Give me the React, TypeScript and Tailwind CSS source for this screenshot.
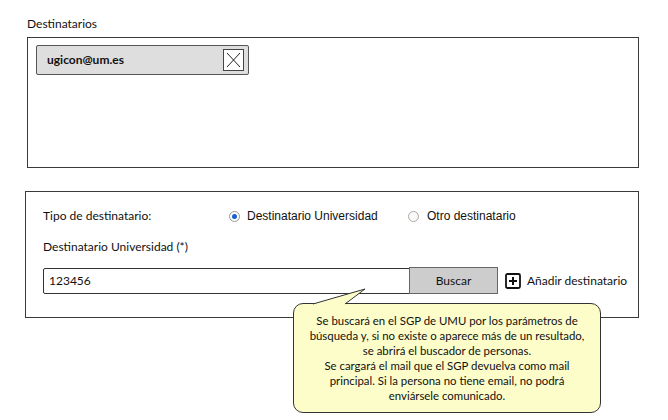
export default function App() {
  return (
    <div className="relative w-[668px] h-[420px] bg-white text-[#111] font-['Lato','Liberation_Sans',sans-serif] overflow-hidden">
      {/* Destinatarios */}
      <div className="pl-[27px] pt-[16px]">
        <p className="text-[12px] leading-[16px]">Destinatarios</p>
        <div className="mt-[5px] w-[612px] h-[131px] border border-[#3a3a3a] pt-[7px] pl-[8px]">
          <div className="w-[213px] h-[30px] bg-[#dedede] border border-[#555] rounded-[2px] flex items-center justify-between pl-[10px] pr-[4px]">
            <span className="text-[12px] font-bold">ugicon@um.es</span>
            <button className="w-[21px] h-[22px] bg-white border border-[#444] flex items-center justify-center">
              <svg width="15" height="16" viewBox="0 0 15 16">
                <path d="M1 1L14 15M14 1L1 15" stroke="#222" strokeWidth="1" fill="none" />
              </svg>
            </button>
          </div>
        </div>
      </div>

      {/* Tipo de destinatario */}
      <div className="ml-[25px] mt-[23px] w-[614px] h-[127px] border border-[#3a3a3a] pl-[17px] pt-[16px]">
        <div className="flex items-center h-[16px]">
          <span className="w-[186px] text-[12px]">Tipo de destinatario:</span>
          <span className="w-[11px] h-[11px] rounded-full border border-[#999] bg-white flex items-center justify-center">
            <span className="w-[5px] h-[5px] rounded-full bg-[#1a5fd0]" />
          </span>
          <span className="ml-[7px] w-[161px] text-[12px] font-['Liberation_Sans',Arial,sans-serif]">Destinatario Universidad</span>
          <span className="w-[11px] h-[11px] rounded-full border border-[#b0a8a0] bg-[#fafafa]" />
          <span className="ml-[8px] text-[12px] font-['Liberation_Sans',Arial,sans-serif]">Otro destinatario</span>
        </div>
        <p className="mt-[15px] text-[12px] leading-[16px]">Destinatario Universidad (*)</p>
        <div className="mt-[12px] flex items-center">
          <div className="w-[367px] h-[26px] border border-[#333] rounded-l-[2px] flex items-center pl-[5px] text-[12px]">123456</div>
          <button className="w-[89px] h-[27px] -ml-px bg-[#cdcdcd] border border-[#666] text-[12px] flex items-center justify-center">Buscar</button>
          <svg className="ml-[7px]" width="16" height="16" viewBox="0 0 16 16">
            <rect x="1" y="1" width="14" height="14" rx="1.5" fill="white" stroke="#111" strokeWidth="1.8" />
            <path d="M8 4V12M4 8H12" stroke="#111" strokeWidth="2" />
          </svg>
          <span className="ml-[6px] text-[12px]">Añadir destinatario</span>
        </div>
      </div>

      {/* Nota */}
      <div className="absolute left-[293px] top-[303px] w-[308px] h-[110px] bg-[#fdfdca] border border-[#333] rounded-[10px] pt-[9px] text-center text-[11.4px] leading-[15px]">
        Se buscará en el SGP de UMU por los parámetros de
        <br />
        búsqueda y, si no existe o aparece más de un resultado,
        <br />
        se abrirá el buscador de personas.
        <br />
        Se cargará el mail que el SGP devuelva como mail
        <br />
        principal. Si la persona no tiene email, no podrá
        <br />
        enviársele comunicado.
      </div>
      <svg className="absolute left-[310px] top-[287px]" width="60" height="20" viewBox="0 0 60 20">
        <polygon points="3,17 55,2 35,17" fill="#fdfdca" />
        <polyline points="3,17 55,2 35,17" fill="none" stroke="#333" strokeWidth="1" />
        <rect x="4" y="17" width="30" height="3" fill="#fdfdca" />
      </svg>
    </div>
  );
}
